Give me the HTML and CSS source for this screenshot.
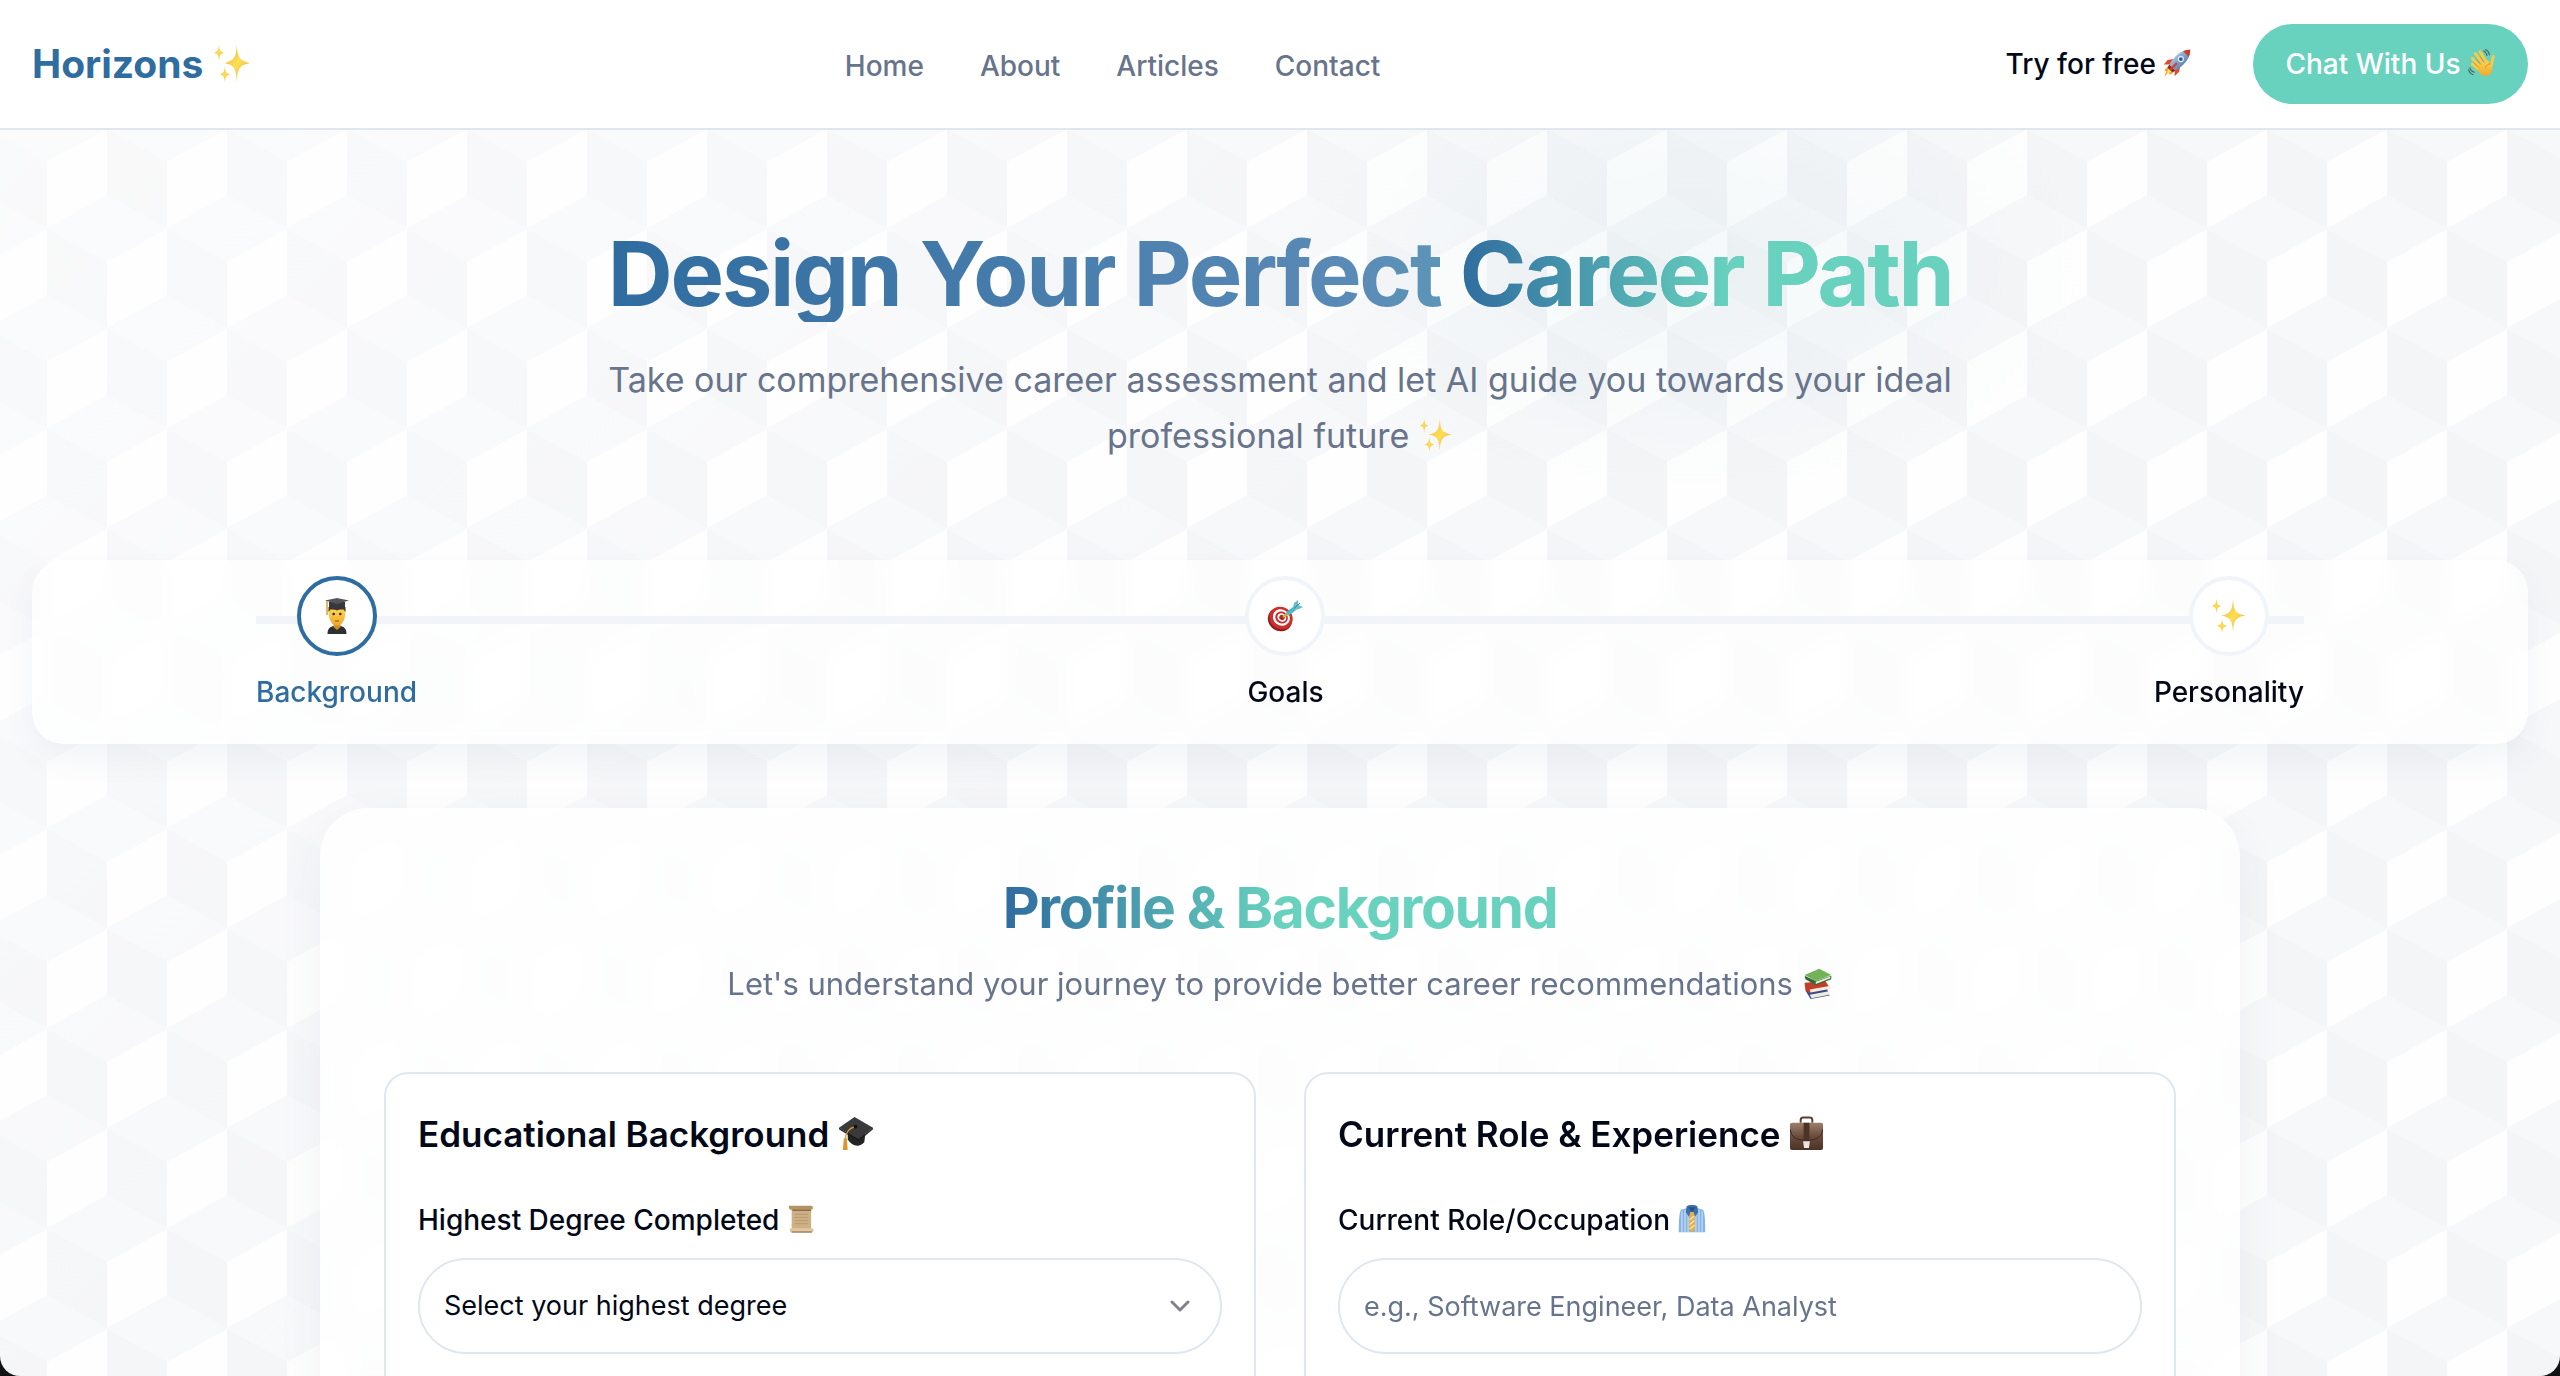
FILE: index.html
```html
<!DOCTYPE html>
<html lang="en">
<head>
    <meta charset="UTF-8">
    <meta name="viewport" content="width=device-width, initial-scale=1.0">
    <title>Horizons - Career Assessment</title>
    <link rel="stylesheet" href="styles.css">
</head>
<body>

    <!-- Shared icons -->
    <svg class="icon-defs" aria-hidden="true">
        <defs>
            <linearGradient id="gold" x1="0" y1="0" x2="1" y2="1">
                <stop offset="0" stop-color="#f3a84e"/>
                <stop offset="0.5" stop-color="#fbe04f"/>
                <stop offset="1" stop-color="#f2a25c"/>
            </linearGradient>
            <linearGradient id="skin" x1="0" y1="0" x2="0" y2="1">
                <stop offset="0" stop-color="#ffd34f"/>
                <stop offset="1" stop-color="#eda92f"/>
            </linearGradient>
            <linearGradient id="leather" x1="0" y1="0" x2="0" y2="1">
                <stop offset="0" stop-color="#9b7f6b"/>
                <stop offset="0.5" stop-color="#6b4c3b"/>
                <stop offset="1" stop-color="#4a3227"/>
            </linearGradient>
            <linearGradient id="hull" x1="0" y1="0" x2="1" y2="1">
                <stop offset="0" stop-color="#dce8f2"/>
                <stop offset="0.5" stop-color="#7fa3cb"/>
                <stop offset="1" stop-color="#39587f"/>
            </linearGradient>
            <symbol id="sparkles" viewBox="0 0 36 36">
                <path fill="url(#gold)" d="M22 1C22.8 12 24 15.500 34.500 17.500C24 19.500 22.800 23 22 34.500C21.200 23 20 19.500 10.500 17.500C20 15.500 21.200 12 22 1Z"/>
                <path fill="url(#gold)" d="M5.500 0.500C6 5.500 6.600 7 10 8C6.600 9 6 10.500 5.500 15.500C5 10.500 4.400 9 1 8C4.400 7 5 5.500 5.500 0.500Z"/>
                <path fill="url(#gold)" d="M11 20.500C11.500 25.500 12.200 27 16 28C12.200 29 11.500 30.500 11 35.500C10.500 30.500 9.800 29 6 28C9.800 27 10.500 25.500 11 20.500Z"/>
            </symbol>
        </defs>
    </svg>

    <header class="navbar">
        <a class="logo" href="#">Horizons <svg class="emoji"><use href="#sparkles"/></svg></a>
        <nav class="nav-links">
            <a href="#">Home</a>
            <a href="#">About</a>
            <a href="#">Articles</a>
            <a href="#">Contact</a>
        </nav>
        <div class="nav-actions">
            <button type="button" class="btn btn-ghost">Try for free
                <svg class="emoji" viewBox="0 0 36 36">
                    <path fill="#e04a2b" d="M13 13L6 14L1 20L10 20ZM22 22L21 29L15 35L15 26Z"/>
                    <path fill="#f6a02d" d="M7 22L14 29L10 33L7 31L2 35L4 29L2 27Z"/>
                    <path fill="#fbe46a" d="M8 24L12 28L8 31L4 33L6 28Z"/>
                    <path fill="url(#hull)" d="M35 1C26 1 18 5 8 20L16 28C31 18 35 10 35 1Z"/>
                    <path fill="#cf3d27" d="M35 1C32 1 29 1.500 26 3L33 10C34.500 7 35 4 35 1Z"/>
                    <path fill="#8f2a23" d="M8 20L6 24L12 30L16 28Z"/>
                    <circle cx="23" cy="13" r="4" fill="#e8eef4"/>
                    <circle cx="23" cy="13" r="2.500" fill="#2d5fa0"/>
                    <path stroke="#d1402b" stroke-width="3" stroke-linecap="round" d="M17 19L10 26"/>
                </svg>
            </button>
            <button type="button" class="btn btn-chat">Chat With Us
                <svg class="emoji" viewBox="0 0 36 36">
                    <g fill="none" stroke="#fbcb48" stroke-width="3.800" stroke-linecap="round">
                        <path d="M15 27L5.500 19.500"/>
                        <path d="M17 24L5.500 12"/>
                        <path d="M20 20L9.500 6"/>
                        <path d="M24 18L15.500 3.500"/>
                        <path d="M29 24C30.500 19 31 15 32.500 9.500"/>
                    </g>
                    <path fill="url(#skin)" d="M13 20L25.500 14.500C27 17 27.500 19 29 19L31 20C32 27 30 32 26 34C20 36.500 15 32 12 26Z"/>
                    <path fill="none" stroke="#c98420" stroke-width="1" d="M8 18L14 24M10 12.500L16.500 20M15.500 9.500L21 17.500M22 25C23 21.500 26 19 29 19"/>
                    <path fill="none" stroke="#4d5c58" stroke-width="1.300" stroke-linecap="round" d="M20 2.500C22.500 3.500 24 5.500 24.500 8.500M22.500 0.700C25.500 2 27 4.500 27.500 7.500M2.500 24C3 27 5 29 8 30M0.800 26.500C1.500 30 3.500 32 6.500 33"/>
                </svg>
            </button>
        </div>
    </header>

    <main>
        <section class="hero">
            <h1>Design Your Perfect <span>Career Path</span></h1>
            <p>Take our comprehensive career assessment and let AI guide you towards your ideal professional future <svg class="emoji"><use href="#sparkles"/></svg></p>
        </section>

        <section class="stepper">
            <ol class="steps">
                <li class="step active">
                    <div class="step-circle">
                        <svg viewBox="0 0 36 36">
                            <path fill="#2e2f33" d="M8.500 36C8.500 30.500 11 28.500 15 28H21C25 28.500 27.500 30.500 27.500 36Z"/>
                            <path fill="#d98e22" d="M14.500 25H21.500V29L18 32L14.500 29Z"/>
                            <path fill="url(#skin)" d="M10 11H26C27 17 25.500 27.500 18 27.500C10.500 27.500 9 17 10 11Z"/>
                            <path fill="#4b3521" d="M9.500 9H26.500V14L24.500 11.500H11.500L9.500 14Z"/>
                            <path fill="#37383c" d="M10 4H26V10C22 11 20 11.500 18 12.500C16 11.500 14 11 10 10Z"/>
                            <path fill="#55565b" d="M18 0L30 2.500L18 6L6 2.500Z"/>
                            <path fill="none" stroke="#e09a3c" stroke-width="1.500" d="M8 3V17"/>
                            <circle cx="14.700" cy="16" r="1.300" fill="#3b2715"/>
                            <circle cx="21.300" cy="16" r="1.300" fill="#3b2715"/>
                            <path fill="none" stroke="#8a5517" stroke-width="1" d="M16 23H20"/>
                        </svg>
                    </div>
                    <span class="step-label">Background</span>
                </li>
                <li class="step">
                    <div class="step-circle">
                        <svg viewBox="0 0 36 36">
                            <ellipse cx="13" cy="21.500" rx="12.500" ry="11.500" fill="#8f1d1d" transform="rotate(35 13 21.500)"/>
                            <ellipse cx="14" cy="20" rx="12" ry="11" fill="#cc2f2c" transform="rotate(35 14 20)"/>
                            <ellipse cx="14.300" cy="19.500" rx="8.800" ry="8" fill="#fff" transform="rotate(35 14.300 19.500)"/>
                            <ellipse cx="14.600" cy="19.500" rx="6.500" ry="5.900" fill="#cc2f2c" transform="rotate(35 14.600 19.500)"/>
                            <ellipse cx="14.800" cy="19.500" rx="4.600" ry="4" fill="#fff" transform="rotate(35 14.800 19.500)"/>
                            <ellipse cx="15" cy="19.500" rx="2.800" ry="2.500" fill="#b32624" transform="rotate(35 15 19.500)"/>
                            <path stroke="#e0a92c" stroke-width="2.500" d="M16 19L20 16"/>
                            <path stroke="#4fb7c9" stroke-width="4.500" stroke-linecap="round" d="M21.500 15L27 11"/>
                            <path fill="#62bfcd" d="M26 10L27 5L31 2L31 7L36 9L32 11L28 12Z"/>
                            <path stroke="#2d7f93" stroke-width="1" d="M27 10.500L33 5"/>
                        </svg>
                    </div>
                    <span class="step-label">Goals</span>
                </li>
                <li class="step">
                    <div class="step-circle">
                        <svg><use href="#sparkles"/></svg>
                    </div>
                    <span class="step-label">Personality</span>
                </li>
            </ol>
        </section>

        <form class="form-card">
            <h2>Profile &amp; Background</h2>
            <p class="form-intro">Let's understand your journey to provide better career recommendations
                <svg class="emoji" viewBox="0 0 36 36">
                    <path fill="#2b4f96" d="M4 26L28 22L32 32L10 36Z"/>
                    <path fill="#f0ead9" d="M9 31L31 27L32 31L11 35Z"/>
                    <path fill="#c43d2c" d="M3 17L27 15L33 24L9 29L4 26Z"/>
                    <path fill="#f5efe0" d="M9 25L32 21L33 24L10 28.500Z"/>
                    <path fill="#2f6a35" d="M3 9L16 15L34 9V13L16 20L4 13Z"/>
                    <path fill="#f2eedf" d="M16 16L33 10V12L16 18.500Z"/>
                    <path fill="#73b357" d="M3 8L20 1L34 8L16 15Z"/>
                </svg>
            </p>

            <div class="form-grid">
                <section class="panel">
                    <h3>Educational Background
                        <svg class="emoji" viewBox="0 0 36 36">
                            <path fill="#242424" d="M10 14L28 19L27 27C22 33 14 31 10 24Z"/>
                            <path fill="#3a3a3a" d="M17 1L36 12L21 24L1 12Z"/>
                            <path fill="#1b1b1b" d="M1 12L21 24L36 12V13.500L21 26L1 13.500Z"/>
                            <path fill="none" stroke="#e0a038" stroke-width="1.500" d="M18 11C12 12 8 15 7.500 25"/>
                            <path fill="#dd9532" d="M6 23H9L10 35H5Z"/>
                            <circle cx="18" cy="11" r="2" fill="#111"/>
                        </svg>
                    </h3>
                    <label for="degree">Highest Degree Completed
                        <svg class="emoji" viewBox="0 0 36 36">
                            <path fill="#cdb084" d="M6 4H31V32H6Z"/>
                            <path fill="#b59263" d="M3 1H31C34 1 34 6 31 6H5C2 6 2 2 3 1Z"/>
                            <path fill="#7d6040" d="M7 6H31V7.500H7Z"/>
                            <path fill="#e0c79d" d="M5 30H32C35 30 35 35 32 35H5C3 35 3 30 5 30Z"/>
                            <path fill="#8e6d47" d="M6 34H32V35.500H6Z"/>
                            <path stroke="#b3946a" stroke-width="1" d="M10 12H27M10 16H27M10 20H27M10 24H27"/>
                        </svg>
                    </label>
                    <select id="degree" class="field">
                        <option>Select your highest degree</option>
                        <option>High School</option>
                        <option>Bachelor's Degree</option>
                        <option>Master's Degree</option>
                        <option>Doctorate</option>
                    </select>
                </section>

                <section class="panel">
                    <h3>Current Role &amp; Experience
                        <svg class="emoji" viewBox="0 0 36 36">
                            <path fill="none" stroke="#5a3f31" stroke-width="2" d="M12 7V4C12 2 13 1.500 15 1.500H21C23 1.500 24 2 24 4V7"/>
                            <rect x="1" y="7" width="34" height="28" rx="2" fill="url(#leather)"/>
                            <path fill="none" stroke="#3c271d" stroke-width="1" d="M1.500 14C2 22 8 25 18 25S34 22 34.500 14"/>
                            <path fill="#4b3327" d="M15 7H21V27H15Z"/>
                            <path fill="#e8e5e2" d="M14.500 26H21.500L20.500 33H15.500Z"/>
                        </svg>
                    </h3>
                    <label for="role">Current Role/Occupation
                        <svg class="emoji" viewBox="0 0 36 36">
                            <path fill="#86b4e6" d="M12 4L4 6C1.500 8 1 22 1 35H35C35 22 34.500 8 32 6L24 4Z"/>
                            <path stroke="#c5def6" stroke-width="1.500" d="M5 8V35M9 6V35M27 6V35M31 8V35M13 10V35M23 10V35"/>
                            <path fill="#3c6fae" d="M11 2C14 -1 22 -1 25 2L26 9L22 15L18 9L14 15L10 9Z"/>
                            <path fill="#274f85" d="M13 3H23L18 9Z"/>
                            <path fill="#e9b13c" d="M16 9H20L21 12L22 31L18 35L14 31L15 12Z"/>
                            <path stroke="#f7ecd0" stroke-width="1.500" d="M15 19L21 14M15 25L21 20M15 31L21 26"/>
                        </svg>
                    </label>
                    <input type="text" id="role" class="field" placeholder="e.g., Software Engineer, Data Analyst">
                </section>
            </div>
        </form>
    </main>

</body>
</html>
```
FILE: styles.css
```css
* {
    box-sizing: border-box;
}
html {
    background: #0f1412;
}
body {
    font-family: Inter, 'Liberation Sans', sans-serif;
    font-size: 28px;
    line-height: 40px;
    color: #020817;
    margin: 0;
    height: 100vh;
    overflow: hidden;
    border-radius: 0 0 20px 20px;
    background-color: #f7f8fa;
    /* soft glow, white fade from the top left, then the tiled cubes */
    background-image:
        radial-gradient(ellipse 420px 240px at 66% 19%, rgba(120, 180, 190, 0.08), rgba(120, 180, 190, 0)),
        linear-gradient(135deg, rgba(255, 255, 255, 0.5), rgba(255, 255, 255, 0) 50%),
        url("data:image/svg+xml,%3Csvg xmlns='http://www.w3.org/2000/svg' width='120' height='200'%3E%3Cg fill='%23fefefe'%3E%3Cpath d='M0 33L60 0V66L0 99Z'/%3E%3Cpath d='M60 133L120 100V166L60 199Z'/%3E%3C/g%3E%3Cg fill='%23f4f5f7'%3E%3Cpath d='M60 0L120 33V99L60 66Z'/%3E%3Cpath d='M0 100L60 133V199L0 166Z'/%3E%3C/g%3E%3C/svg%3E");
    background-position: 0 0, 0 0, 47px 129px;
}
h1, h2, h3, p, ol {
    margin: 0;
    padding: 0;
}
a {
    color: inherit;
    text-decoration: none;
}
.icon-defs {
    position: absolute;
    width: 0;
    height: 0;
}
.emoji {
    width: 1em;
    height: 1em;
    vertical-align: -0.12em;
}

/* Navbar */
.navbar {
    display: flex;
    align-items: center;
    justify-content: space-between;
    padding: 24px 32px;
    background: #fff;
    border-bottom: 2px solid #e1e7ef;
}
.logo {
    font-size: 39px;
    font-weight: 700;
    color: #2f6c9f;
}
.nav-links {
    display: flex;
    gap: 56px;
    padding-top: 4px;
    font-weight: 500;
    color: #67748b;
}
.nav-actions {
    display: flex;
    gap: 32px;
}
.btn {
    height: 80px;
    padding: 0 32px;
    border: none;
    border-radius: 40px;
    background: transparent;
    font: inherit;
    font-weight: 500;
    color: #020817;
    cursor: pointer;
}
.btn-ghost {
    padding-right: 30px;
}
.btn-chat {
    background: #68d2be;
    color: #fff;
}

/* Hero */
.hero {
    padding: 96px 32px;
    text-align: center;
}
h1 {
    width: fit-content;
    margin: 0 auto 30px;
    font-size: 90px;
    line-height: 96px;
    font-weight: 700;
    letter-spacing: -0.025em;
    color: transparent;
    background: linear-gradient(90deg, #2f6c9f, #5a8ab6 55%, #68d2be);
    background-clip: text;
}
h1 span {
    display: inline-block;
    background: linear-gradient(90deg, #2f6c9f, #68d2be 55%);
    background-clip: text;
}
.hero p {
    max-width: 1344px;
    margin: 0 auto;
    font-size: 34px;
    line-height: 56px;
    color: #67748b;
}

/* Stepper */
.stepper {
    margin: 0 32px 64px;
    padding: 16px 224px 32px;
    border-radius: 32px;
    background: rgba(255, 255, 255, 0.7);
    backdrop-filter: blur(8px);
    box-shadow: 0 16px 32px rgba(47, 80, 130, 0.06);
}
.steps {
    display: flex;
    justify-content: space-between;
    list-style: none;
    background: linear-gradient(#f1f5f9, #f1f5f9) 0 40px / 100% 8px no-repeat;
}
.step {
    display: flex;
    flex-direction: column;
    align-items: center;
    gap: 16px;
    font-weight: 500;
}
.step-circle {
    display: flex;
    align-items: center;
    justify-content: center;
    width: 80px;
    height: 80px;
    border: 4px solid #f1f5f9;
    border-radius: 50%;
    background: #fff;
}
.step-circle svg {
    width: 36px;
    height: 36px;
}
.step.active {
    color: #2f6c9f;
}
.step.active .step-circle {
    border-color: #2f6c9f;
}

/* Form */
.form-card {
    width: 75%;
    margin: 0 auto;
    padding: 64px;
    border-radius: 48px;
    background: rgba(255, 255, 255, 0.8);
    backdrop-filter: blur(12px);
    box-shadow: 0 16px 48px rgba(47, 60, 90, 0.06);
}
h2 {
    width: fit-content;
    margin: 0 auto 16px;
    font-size: 57px;
    line-height: 72px;
    font-weight: 700;
    letter-spacing: -0.025em;
    color: transparent;
    background: linear-gradient(90deg, #2f6c9f, #68d2be 50%);
    background-clip: text;
}
.form-intro {
    margin-bottom: 64px;
    font-size: 31px;
    line-height: 48px;
    text-align: center;
    color: #67748b;
}
.form-grid {
    display: grid;
    grid-template-columns: 1fr 1fr;
    gap: 48px;
}
.panel {
    padding: 32px 32px 64px;
    border: 2px solid #e1e7ef;
    border-radius: 24px;
    background: #fff;
}
h3 {
    margin-bottom: 40px;
    font-size: 35px;
    line-height: 56px;
    font-weight: 600;
}
label {
    display: block;
    margin-bottom: 20px;
    line-height: 36px;
    font-weight: 500;
}
.field {
    display: block;
    width: 100%;
    height: 96px;
    padding: 0 24px;
    border: 2px solid #e1e7ef;
    border-radius: 48px;
    background: #fff;
    font: inherit;
    font-size: 27px;
    color: #020817;
}
.field::placeholder {
    color: #67748b;
    opacity: 1;
}
select.field {
    appearance: none;
    background: #fff url("data:image/svg+xml,%3Csvg xmlns='http://www.w3.org/2000/svg' width='20' height='12' fill='none' stroke='%23808289' stroke-width='3' stroke-linecap='round' stroke-linejoin='round'%3E%3Cpath d='M2 2L10 10L18 2'/%3E%3C/svg%3E") right 30px center no-repeat;
}
```
